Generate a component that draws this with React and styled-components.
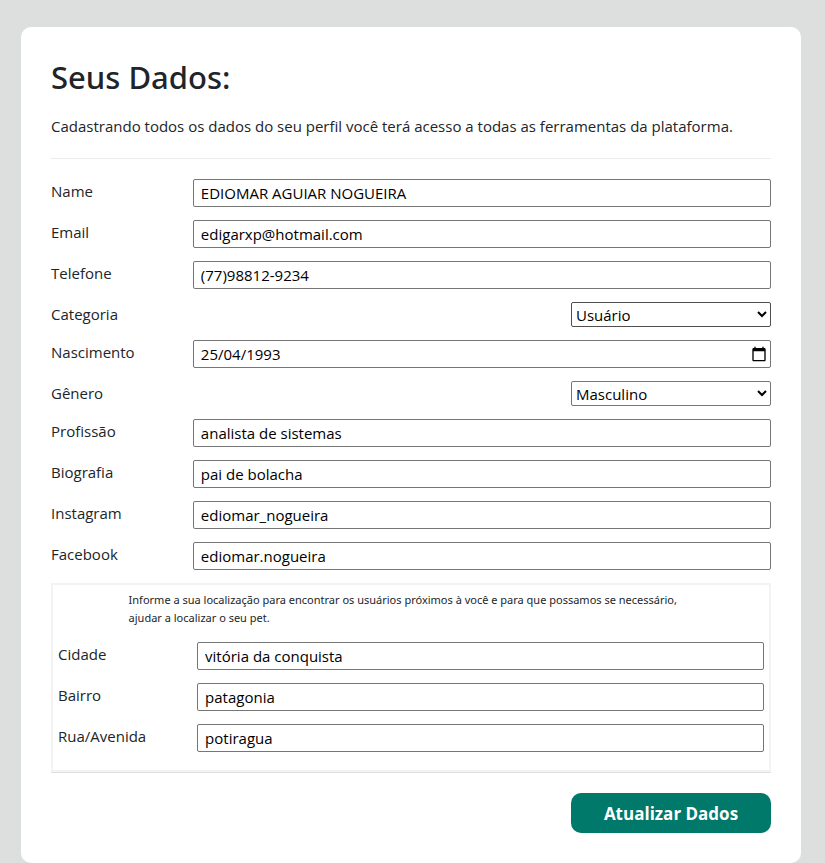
import React from "react";
import styled, { createGlobalStyle } from "styled-components";

const GlobalStyle = createGlobalStyle`
  *, *::before, *::after { box-sizing: border-box; }
  body {
    margin: 0;
    background: #dddfde;
    color: #212529;
    font-family: "Segoe UI", "Open Sans", "Noto Sans", sans-serif;
    font-size: 15px;
    line-height: 24px;
  }
`;

const Card = styled.main`
  margin: 27px 24px 0 21px;
  padding: 30px;
  background: #fff;
  border-radius: 10px;
`;

const Title = styled.h1`
  margin: 0 0 17px;
  font-family: "Segoe UI", "Noto Sans", sans-serif;
  font-size: 31px;
  font-weight: 500;
  line-height: 40px;
`;

const Intro = styled.p`
  margin: 0 0 20px;
`;

const Divider = styled.hr`
  margin: 0 0 20px;
  border: 0;
  border-top: 1px solid #ececec;
`;

const Form = styled.form`
  display: flex;
  flex-direction: column;
`;

const Fields = styled.div`
  display: flex;
  flex-direction: column;
  gap: 13px;
`;

const Row = styled.div`
  display: flex;
  align-items: flex-start;
  justify-content: space-between;
`;

const Label = styled.label`
  line-height: 25px;
`;

const Input = styled.input`
  width: 80.3%;
  height: 28px;
  padding: 1px 7px;
  border: 1px solid #767676;
  border-radius: 2px;
  background: #fff;
  color: #000;
  font: inherit;
`;

const DateBox = styled.div`
  display: flex;
  align-items: center;
  width: 80.3%;
  height: 28px;
  padding: 0 3px 0 7px;
  border: 1px solid #767676;
  border-radius: 2px;
`;

const DateInput = styled.input`
  flex: 1;
  min-width: 0;
  padding: 1px 0;
  border: 0;
  background: transparent;
  color: #000;
  font: inherit;
`;

const PickerButton = styled.button`
  display: flex;
  padding: 0;
  border: 0;
  background: none;
  color: #000;
`;

const Select = styled.select`
  width: 200px;
  height: 25px;
  padding: 0;
  border: 1px solid ${(p) => (p.$strong ? "#4f4f4f" : "#767676")};
  border-radius: 2px;
  background-color: #fff;
  color: #000;
  font: inherit;
`;

const Location = styled.section`
  margin-top: 13px;
  padding: 6px 5px 18px;
  border: 2px solid #f3f3f3;
`;

const Hint = styled.p`
  width: 80%;
  margin: 0 auto 15px;
  font-family: "Segoe UI", "Noto Sans", sans-serif;
  font-size: 11px;
  line-height: 18px;
`;

const Footer = styled.div`
  display: flex;
  justify-content: flex-end;
  padding-top: 20px;
  border-top: 1px solid #dfe0e0;
`;

const Submit = styled.button`
  width: 200px;
  height: 40px;
  padding: 2px 6px 0;
  border: 0;
  border-radius: 10px;
  background: #00796b;
  color: #fff;
  font: inherit;
  font-size: 17px;
  font-weight: 700;
`;

const CalendarIcon = () => (
  <svg width="16" height="16" viewBox="0 0 24 24" fill="currentColor" aria-hidden="true">
    <path d="M20 3h-1V1h-2v2H7V1H5v2H4c-1.100 0-2 .900-2 2v16c0 1.100.900 2 2 2h16c1.100 0 2-.900 2-2V5c0-1.100-.900-2-2-2zm0 18H4V8h16v13z" />
  </svg>
);

const TextField = ({ id, label, value, type = "text" }) => (
  <Row>
    <Label htmlFor={id}>{label}</Label>
    <Input id={id} type={type} defaultValue={value} />
  </Row>
);

const SelectField = ({ id, label, options, strong }) => (
  <Row>
    <Label htmlFor={id}>{label}</Label>
    <Select id={id} $strong={strong}>
      {options.map((option) => (
        <option key={option}>{option}</option>
      ))}
    </Select>
  </Row>
);

export default function App() {
  return (
    <>
      <GlobalStyle />
      <Card>
        <Title>Seus Dados:</Title>
        <Intro>
          Cadastrando todos os dados do seu perfil você terá acesso a todas as ferramentas da plataforma.
        </Intro>
        <Divider />
        <Form onSubmit={(event) => event.preventDefault()}>
          <Fields>
            <TextField id="name" label="Name" value="EDIOMAR AGUIAR NOGUEIRA" />
            <TextField id="email" label="Email" type="email" value="edigarxp@hotmail.com" />
            <TextField id="phone" label="Telefone" type="tel" value="(77)98812-9234" />
            <SelectField id="category" label="Categoria" options={["Usuário"]} strong />
            <Row>
              <Label htmlFor="birth">Nascimento</Label>
              <DateBox>
                <DateInput id="birth" type="text" defaultValue="25/04/1993" />
                <PickerButton type="button" aria-label="Abrir calendário">
                  <CalendarIcon />
                </PickerButton>
              </DateBox>
            </Row>
            <SelectField id="gender" label="Gênero" options={["Masculino"]} />
            <TextField id="job" label="Profissão" value="analista de sistemas" />
            <TextField id="bio" label="Biografia" value="pai de bolacha" />
            <TextField id="instagram" label="Instagram" value="ediomar_nogueira" />
            <TextField id="facebook" label="Facebook" value="ediomar.nogueira" />
          </Fields>
          <Location>
            <Hint>
              Informe a sua localização para encontrar os usuários próximos à você e para que possamos se
              necessário, ajudar a localizar o seu pet.
            </Hint>
            <Fields>
              <TextField id="city" label="Cidade" value="vitória da conquista" />
              <TextField id="district" label="Bairro" value="patagonia" />
              <TextField id="street" label="Rua/Avenida" value="potiragua" />
            </Fields>
          </Location>
          <Footer>
            <Submit type="submit">Atualizar Dados</Submit>
          </Footer>
        </Form>
      </Card>
    </>
  );
}
